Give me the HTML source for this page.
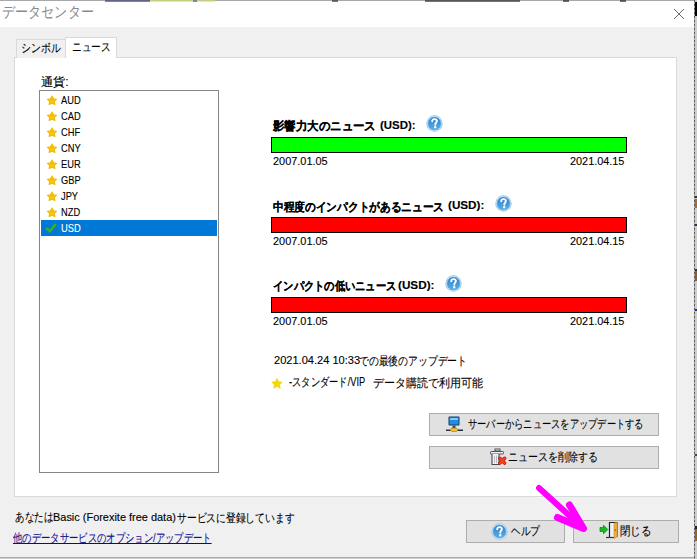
<!DOCTYPE html>
<html><head><meta charset="utf-8">
<style>
*{margin:0;padding:0;box-sizing:border-box}
html,body{width:697px;height:559px;overflow:hidden;background:#f0f0f0}
body{position:relative;-webkit-text-stroke:0.12px currentColor;font-family:"Liberation Sans",sans-serif;font-size:12px;color:#000}
.a{position:absolute;white-space:nowrap;transform-origin:0 0;transform:scaleX(var(--s,1))}
#title{left:0;top:0;width:694px;height:27px;background:#fff;border-top:1px solid #a8a8a8}
#t_title{-webkit-text-stroke:0;font-size:15px;color:#8a8a8a}
#rstrip{left:694px;top:0;width:3px;height:559px;background:repeating-linear-gradient(180deg,#5e5e5e 0 2px,#a8a8a8 2px 4px) 0 0/1px 100% no-repeat,#cccccc}
#panel{left:14px;top:57px;width:663px;height:440px;background:#fff;border:1px solid #d9d9d9}
.tab{height:19px;border:1px solid #d9d9d9;border-bottom:none;background:#f0f0f0}
#tab1{left:16px;top:39px;width:50px}
#tab2{left:65px;top:37px;width:52px;height:21px;background:#fff}
.tt{font-size:12px;top:42px}
#list{left:39px;top:90px;width:180px;height:383px;border:1px solid #868686;background:#fff}
.li{left:60px;font-size:11px}
.sel{left:41px;top:220px;width:176px;height:16px;background:#0078d7}
.bar{left:271px;width:356px;height:16px;border:1px solid #000}
.h{left:273px;font-weight:bold;font-size:12px}
.d{font-size:11px}
.btn{background:#e1e1e1;border:1px solid #adadad}
</style></head><body>
<div class="a" id="title"></div>
<div class="a" id="t_title" style="left:2.1px;top:3.0px;--s:0.874">データセンター</div>
<div class="a" style="left:0;top:557px;width:694px;height:1px;background:#aaa"></div><div class="a" style="left:0;top:558px;width:694px;height:1px;background:#cdcdcd"></div>
<div class="a" id="rstrip"></div>
<div class="a" style="left:695px;top:2px;width:2px;height:14px;background:#000"></div><div class="a" style="left:695px;top:196px;width:2px;height:2px;background:#333"></div><div class="a" style="left:695px;top:199px;width:2px;height:9px;background:#a86a30"></div><div class="a" style="left:695px;top:224px;width:2px;height:2px;background:#334"></div><div class="a" style="left:695px;top:269px;width:2px;height:2px;background:#333"></div><div class="a" style="left:695px;top:271px;width:2px;height:10px;background:#8a5a30"></div><div class="a" style="left:695px;top:309px;width:2px;height:2px;background:#223080"></div><div class="a" style="left:695px;top:454px;width:2px;height:2px;background:#444"></div><div class="a" style="left:695px;top:526px;width:2px;height:3px;background:#222"></div><div class="a" style="left:695px;top:529px;width:2px;height:12px;background:#9a6020"></div>
<div class="a" style="left:105px;top:0;width:45px;height:2px;opacity:0.65;background:#3a3f70"></div><div class="a" style="left:150px;top:0;width:65px;height:2px;opacity:0.65;background:#d8e070"></div><div class="a" style="left:193px;top:0;width:4px;height:2px;opacity:0.65;background:#4060c0"></div><div class="a" style="left:332px;top:0;width:6px;height:2px;opacity:0.65;background:#303030"></div><div class="a" style="left:425px;top:0;width:95px;height:2px;opacity:0.65;background:#2a2a2a"></div><div class="a" style="left:563px;top:0;width:6px;height:2px;opacity:0.65;background:#222"></div><div class="a" style="left:620px;top:0;width:6px;height:2px;opacity:0.65;background:#222"></div>
<svg class="a" style="left:673px;top:8px" width="12" height="12"><path d="M1 1L11 11M11 1L1 11" stroke="#6a6a6a" stroke-width="1"/></svg>

<div class="a" id="panel"></div>
<div class="a tab" id="tab1"></div>
<div class="a tab" id="tab2"></div>
<div class="a tt" id="t_tab1" style="left:20.6px;top:40.0px;--s:0.820">シンボル</div>
<div class="a tt" id="t_tab2" style="left:71.8px;top:39.0px;--s:0.808">ニュース</div>

<div class="a" id="t_cur" style="left:40.9px;top:74.0px;--s:1.014">通貨:</div>
<div class="a" id="list"></div>
<div class="a sel"></div>
<svg class="a" style="left:45.5px;top:94.8px" width="12" height="11" viewBox="0 0 12 11"><path d="M6 1.2L7.4 3.9L10.4 4.3L8.2 6.4L8.8 9.5L6 8L3.2 9.5L3.8 6.4L1.6 4.3L4.6 3.9Z" fill="#f7cd10" stroke="#f0b800" stroke-width="1.2" stroke-linejoin="round"/><path d="M6 3.5L7 5.3L6 7L5 5.3Z" fill="#f0a800" opacity="0.6"/></svg><svg class="a" style="left:45.5px;top:110.8px" width="12" height="11" viewBox="0 0 12 11"><path d="M6 1.2L7.4 3.9L10.4 4.3L8.2 6.4L8.8 9.5L6 8L3.2 9.5L3.8 6.4L1.6 4.3L4.6 3.9Z" fill="#f7cd10" stroke="#f0b800" stroke-width="1.2" stroke-linejoin="round"/><path d="M6 3.5L7 5.3L6 7L5 5.3Z" fill="#f0a800" opacity="0.6"/></svg><svg class="a" style="left:45.5px;top:126.8px" width="12" height="11" viewBox="0 0 12 11"><path d="M6 1.2L7.4 3.9L10.4 4.3L8.2 6.4L8.8 9.5L6 8L3.2 9.5L3.8 6.4L1.6 4.3L4.6 3.9Z" fill="#f7cd10" stroke="#f0b800" stroke-width="1.2" stroke-linejoin="round"/><path d="M6 3.5L7 5.3L6 7L5 5.3Z" fill="#f0a800" opacity="0.6"/></svg><svg class="a" style="left:45.5px;top:142.8px" width="12" height="11" viewBox="0 0 12 11"><path d="M6 1.2L7.4 3.9L10.4 4.3L8.2 6.4L8.8 9.5L6 8L3.2 9.5L3.8 6.4L1.6 4.3L4.6 3.9Z" fill="#f7cd10" stroke="#f0b800" stroke-width="1.2" stroke-linejoin="round"/><path d="M6 3.5L7 5.3L6 7L5 5.3Z" fill="#f0a800" opacity="0.6"/></svg><svg class="a" style="left:45.5px;top:158.8px" width="12" height="11" viewBox="0 0 12 11"><path d="M6 1.2L7.4 3.9L10.4 4.3L8.2 6.4L8.8 9.5L6 8L3.2 9.5L3.8 6.4L1.6 4.3L4.6 3.9Z" fill="#f7cd10" stroke="#f0b800" stroke-width="1.2" stroke-linejoin="round"/><path d="M6 3.5L7 5.3L6 7L5 5.3Z" fill="#f0a800" opacity="0.6"/></svg><svg class="a" style="left:45.5px;top:174.8px" width="12" height="11" viewBox="0 0 12 11"><path d="M6 1.2L7.4 3.9L10.4 4.3L8.2 6.4L8.8 9.5L6 8L3.2 9.5L3.8 6.4L1.6 4.3L4.6 3.9Z" fill="#f7cd10" stroke="#f0b800" stroke-width="1.2" stroke-linejoin="round"/><path d="M6 3.5L7 5.3L6 7L5 5.3Z" fill="#f0a800" opacity="0.6"/></svg><svg class="a" style="left:45.5px;top:190.8px" width="12" height="11" viewBox="0 0 12 11"><path d="M6 1.2L7.4 3.9L10.4 4.3L8.2 6.4L8.8 9.5L6 8L3.2 9.5L3.8 6.4L1.6 4.3L4.6 3.9Z" fill="#f7cd10" stroke="#f0b800" stroke-width="1.2" stroke-linejoin="round"/><path d="M6 3.5L7 5.3L6 7L5 5.3Z" fill="#f0a800" opacity="0.6"/></svg><svg class="a" style="left:45.5px;top:206.8px" width="12" height="11" viewBox="0 0 12 11"><path d="M6 1.2L7.4 3.9L10.4 4.3L8.2 6.4L8.8 9.5L6 8L3.2 9.5L3.8 6.4L1.6 4.3L4.6 3.9Z" fill="#f7cd10" stroke="#f0b800" stroke-width="1.2" stroke-linejoin="round"/><path d="M6 3.5L7 5.3L6 7L5 5.3Z" fill="#f0a800" opacity="0.6"/></svg>
<svg class="a" style="left:45px;top:223px" width="12" height="10" viewBox="0 0 12 10"><path d="M2 5.8L4.9 8.3L10.2 1.8" fill="none" stroke="#3cb01c" stroke-width="2.6" stroke-linecap="round" stroke-linejoin="round"/></svg>
<div class="a li" id="t_aud" style="left:61.0px;top:94.0px;--s:0.846">AUD</div>
<div class="a li" style="left:61.0px;top:110.0px;--s:0.846">CAD</div>
<div class="a li" style="left:61.0px;top:126.0px;--s:0.846">CHF</div>
<div class="a li" style="left:61.0px;top:142.0px;--s:0.846">CNY</div>
<div class="a li" style="left:61.0px;top:158.0px;--s:0.846">EUR</div>
<div class="a li" style="left:61.0px;top:174.0px;--s:0.846">GBP</div>
<div class="a li" style="left:61.0px;top:190.0px;--s:0.846">JPY</div>
<div class="a li" style="left:61.0px;top:206.0px;--s:0.846">NZD</div>
<div class="a li" id="t_usd" style="left:60.7px;top:222.0px;color:#fff;--s:0.85">USD</div>

<svg class="a" style="left:426px;top:115px" width="17" height="17" viewBox="0 0 17 17"><defs><linearGradient id="hg426" x1="0" y1="0" x2="0" y2="1"><stop offset="0" stop-color="#2f7fc8"/><stop offset="1" stop-color="#58aee6"/></linearGradient></defs><circle cx="8.5" cy="8.5" r="8.2" fill="#98c8ec"/><circle cx="8.5" cy="8.5" r="7.4" fill="#dcedfa"/><circle cx="8.5" cy="8.5" r="6.5" fill="url(#hg426)" stroke="#5ea9df" stroke-width="0.8"/><path d="M6.2 6.3C6.2 4.9 7.2 4.1 8.5 4.1C9.9 4.1 10.9 4.9 10.9 6.1C10.9 7.5 9.3 7.8 9.3 9.3V9.8" fill="none" stroke="#fff" stroke-width="1.9" stroke-linecap="round"/><rect x="8.1" y="11.2" width="2.2" height="2.1" fill="#fff"/></svg>
<svg class="a" style="left:494.5px;top:194.5px" width="17" height="17" viewBox="0 0 17 17"><defs><linearGradient id="hg494" x1="0" y1="0" x2="0" y2="1"><stop offset="0" stop-color="#2f7fc8"/><stop offset="1" stop-color="#58aee6"/></linearGradient></defs><circle cx="8.5" cy="8.5" r="8.2" fill="#98c8ec"/><circle cx="8.5" cy="8.5" r="7.4" fill="#dcedfa"/><circle cx="8.5" cy="8.5" r="6.5" fill="url(#hg494)" stroke="#5ea9df" stroke-width="0.8"/><path d="M6.2 6.3C6.2 4.9 7.2 4.1 8.5 4.1C9.9 4.1 10.9 4.9 10.9 6.1C10.9 7.5 9.3 7.8 9.3 9.3V9.8" fill="none" stroke="#fff" stroke-width="1.9" stroke-linecap="round"/><rect x="8.1" y="11.2" width="2.2" height="2.1" fill="#fff"/></svg>
<svg class="a" style="left:444.5px;top:275px" width="17" height="17" viewBox="0 0 17 17"><defs><linearGradient id="hg444" x1="0" y1="0" x2="0" y2="1"><stop offset="0" stop-color="#2f7fc8"/><stop offset="1" stop-color="#58aee6"/></linearGradient></defs><circle cx="8.5" cy="8.5" r="8.2" fill="#98c8ec"/><circle cx="8.5" cy="8.5" r="7.4" fill="#dcedfa"/><circle cx="8.5" cy="8.5" r="6.5" fill="url(#hg444)" stroke="#5ea9df" stroke-width="0.8"/><path d="M6.2 6.3C6.2 4.9 7.2 4.1 8.5 4.1C9.9 4.1 10.9 4.9 10.9 6.1C10.9 7.5 9.3 7.8 9.3 9.3V9.8" fill="none" stroke="#fff" stroke-width="1.9" stroke-linecap="round"/><rect x="8.1" y="11.2" width="2.2" height="2.1" fill="#fff"/></svg>
<div class="a h" id="t_h1a" style="font-size:11.5px;left:273.0px;top:119.0px;--s:0.953">影響力大のニュース</div>
<div class="a h" id="t_h1b" style="left:379.6px;top:119.2px;--s:1.040;font-size:11px">(USD):</div>
<div class="a bar" style="top:137px;background:#00ff00"></div>
<div class="a d" id="t_d1l" style="left:273.2px;top:154.9px;--s:0.992">2007.01.05</div>
<div class="a d" id="t_d1r" style="left:570.2px;top:155.0px;--s:0.988">2021.04.15</div>

<div class="a h" id="t_h2a" style="font-size:11.5px;left:272.5px;top:200.0px;--s:0.891">中程度のインパクトがあるニュース</div>
<div class="a h" id="t_h2b" style="left:447.6px;top:199.0px;--s:1.062;font-size:11px">(USD):</div>
<div class="a bar" style="top:217px;background:#ff0000"></div>
<div class="a d" style="left:273.2px;top:234.9px;--s:0.992">2007.01.05</div>
<div class="a d" style="left:570.2px;top:235.0px;--s:0.988">2021.04.15</div>

<div class="a h" id="t_h3a" style="font-size:11.5px;left:273.1px;top:278.8px;--s:0.856">インパクトの低いニュース</div>
<div class="a h" id="t_h3b" style="left:397.6px;top:278.6px;--s:1.065;font-size:11px">(USD):</div>
<div class="a bar" style="top:297px;background:#ff0000"></div>
<div class="a d" style="left:273.2px;top:314.9px;--s:0.992">2007.01.05</div>
<div class="a d" style="left:570.2px;top:315.0px;--s:0.988">2021.04.15</div>

<div class="a" id="t_upd1" style="left:274.1px;top:354.0px;--s:1.006;font-size:11px">2021.04.24 10:33</div>
<div class="a" id="t_upd2" style="left:359.0px;top:353.0px;--s:0.819">での最後のアップデート</div>
<svg class="a" style="left:271px;top:377.5px" width="12" height="11" viewBox="0 0 12 11"><path d="M6 0.5L7.6 3.8L11.2 4.2L8.5 6.6L9.3 10.3L6 8.4L2.7 10.3L3.5 6.6L0.8 4.2L4.4 3.8Z" fill="#f2dc00" stroke="#e8c800" stroke-width="0.6" stroke-linejoin="round"/></svg>
<div class="a" id="t_vip1" style="left:289.4px;top:374.0px;--s:0.773">-スタンダード/VIP</div>
<div class="a" id="t_vip2" style="left:373.1px;top:375.0px;--s:0.919">データ購読で利用可能</div>

<div class="a btn" style="left:429px;top:413px;width:230px;height:23px"></div>
<svg class="a" style="left:446px;top:416px" width="17" height="16" viewBox="0 0 17 16"><rect x="2.5" y="0.5" width="11" height="9" rx="1" fill="#1e3a6a"/><rect x="3.5" y="1.5" width="9" height="7" fill="#1f8fe6"/><rect x="4" y="2" width="8" height="2" fill="#6fd0ff"/><rect x="6.5" y="9.5" width="3" height="3" fill="#3a4a6a"/><rect x="0" y="13.5" width="17" height="1.5" fill="#2a2f45"/><ellipse cx="8" cy="13.8" rx="4" ry="1.8" fill="#f2c030" stroke="#a07010" stroke-width="0.6"/></svg>
<div class="a" id="t_b1" style="left:467.6px;top:416.0px;--s:0.770">サーバーからニュースをアップデートする</div>
<div class="a btn" style="left:429px;top:446px;width:230px;height:23px"></div>
<svg class="a" style="left:489px;top:448px" width="18" height="18" viewBox="0 0 18 18"><rect x="6" y="1" width="5" height="2" fill="none" stroke="#555" stroke-width="1"/><rect x="1.5" y="3.5" width="13" height="2.5" rx="0.8" fill="#f4f4f4" stroke="#4a4a4a" stroke-width="1"/><path d="M3 6V16.5H10V6" fill="#f0f4f8" stroke="#4a4a4a" stroke-width="1.1"/><path d="M5.5 7.5V15M7.5 7.5V15" stroke="#aab" stroke-width="0.8"/><path d="M10.8 10.3L15.6 15.1M15.6 10.3L10.8 15.1" stroke="#b01808" stroke-width="3.4" stroke-linecap="round"/><path d="M10.8 10.3L15.6 15.1M15.6 10.3L10.8 15.1" stroke="#ff4422" stroke-width="2" stroke-linecap="round"/></svg>
<div class="a" id="t_b2" style="left:508.0px;top:449.0px;--s:0.830">ニュースを削除する</div>

<div class="a" id="t_reg1" style="left:15.3px;top:508.6px;--s:0.792">あなたは</div>
<div class="a" id="t_reg2" style="left:52.6px;top:511.2px;--s:0.995;font-size:11px">Basic (Forexite free data)</div>
<div class="a" id="t_reg3" style="left:176.8px;top:509.6px;--s:0.815">サービスに登録しています</div>
<div class="a" id="t_link" style="left:13.0px;top:529.6px;color:#101090;text-decoration:underline;text-decoration-color:#0000e0;--s:0.778">他のデータサービスのオプション/アップデート</div>

<div class="a btn" style="left:466px;top:520px;width:99px;height:23px"></div>
<svg class="a" style="left:490.5px;top:523px" width="17" height="17" viewBox="0 0 17 17"><defs><linearGradient id="hg490" x1="0" y1="0" x2="0" y2="1"><stop offset="0" stop-color="#2f7fc8"/><stop offset="1" stop-color="#58aee6"/></linearGradient></defs><circle cx="8.5" cy="8.5" r="8.2" fill="#98c8ec"/><circle cx="8.5" cy="8.5" r="7.4" fill="#dcedfa"/><circle cx="8.5" cy="8.5" r="6.5" fill="url(#hg490)" stroke="#5ea9df" stroke-width="0.8"/><path d="M6.2 6.3C6.2 4.9 7.2 4.1 8.5 4.1C9.9 4.1 10.9 4.9 10.9 6.1C10.9 7.5 9.3 7.8 9.3 9.3V9.8" fill="none" stroke="#fff" stroke-width="1.9" stroke-linecap="round"/><rect x="8.1" y="11.2" width="2.2" height="2.1" fill="#fff"/></svg>
<div class="a" id="t_help" style="left:511.4px;top:523.0px;--s:0.808">ヘルプ</div>
<div class="a btn" style="left:573px;top:520px;width:106px;height:23px"></div>
<svg class="a" style="left:599px;top:521px" width="20" height="19" viewBox="0 0 20 19"><path d="M1 6.5H4.5V4.2L8.8 8.5L4.5 12.8V10.5H1Z" fill="#10c020" stroke="#0a7a10" stroke-width="0.7" stroke-linejoin="round"/><path d="M10.5 16V1.5H18V16" fill="#eaf2fb" stroke="#222" stroke-width="1.2"/><path d="M7 16.5H15" stroke="#333" stroke-width="1.2"/><path d="M15 2V17.5L18.2 16V1.5Z" fill="#f0b040" stroke="#c88a20" stroke-width="0.6"/><rect x="15.8" y="8.5" width="1.2" height="1.2" fill="#6a4a10"/></svg>
<div class="a" id="t_close" style="left:620.2px;top:523.2px;--s:0.873">閉じる</div>
<svg class="a" style="left:0;top:0" width="697" height="559"><g stroke="#ff00ff" stroke-linecap="round" stroke-linejoin="round" fill="#ff00ff"><path d="M539 488L583 528" stroke-width="6"/><path d="M569.5 505L583.5 528.5L557.5 517.5" stroke-width="7" fill="none"/><path d="M576 518L582 527L572 522Z" stroke-width="2"/></g></svg>
</body></html>
